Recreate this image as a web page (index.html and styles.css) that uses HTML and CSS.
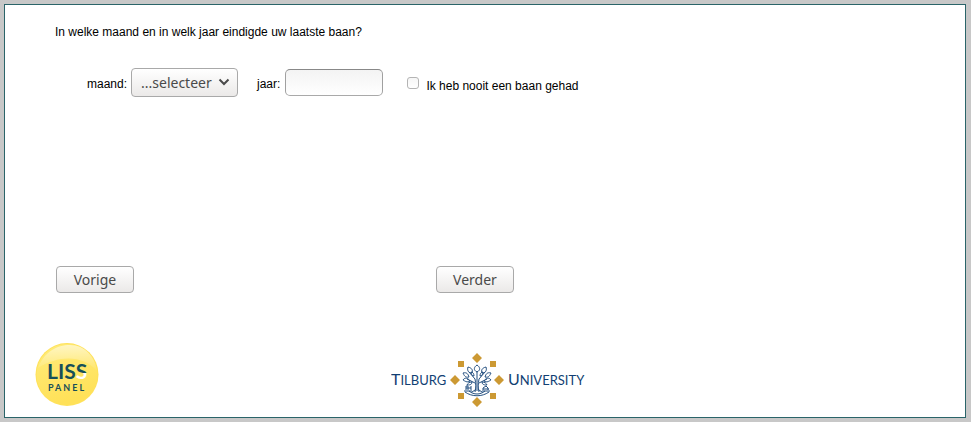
FILE: index.html
```html
<!DOCTYPE html>
<html lang="nl">
<head>
<meta charset="utf-8">
<meta name="viewport" content="width=device-width, initial-scale=1">
<title>LISS panel</title>
<link rel="stylesheet" href="styles.css">
</head>
<body>
<main class="panel">
  <form class="survey">
    <p class="question">In welke maand en in welk jaar eindigde uw laatste baan?</p>
    <div class="fields">
      <div class="field field-month">
        <label class="field-label" for="month">maand:</label>
        <span class="select-wrap">
          <select id="month" class="control select">
            <option>...selecteer</option>
            <option>januari</option><option>februari</option><option>maart</option>
            <option>april</option><option>mei</option><option>juni</option>
            <option>juli</option><option>augustus</option><option>september</option>
            <option>oktober</option><option>november</option><option>december</option>
          </select>
          <svg class="chevron" viewBox="0 0 12 8" aria-hidden="true"><path d="M1.500 1.500 6 6l4.500-4.500"/></svg>
        </span>
      </div>
      <div class="field field-year">
        <label class="field-label" for="year">jaar:</label>
        <input id="year" class="control year" type="text">
      </div>
      <div class="field field-never">
        <input id="never" class="tick" type="checkbox">
        <label class="tick-label" for="never">Ik heb nooit een baan gehad</label>
      </div>
    </div>
    <div class="actions">
      <button class="control button" type="button">Vorige</button>
      <button class="control button" type="button">Verder</button>
    </div>
  </form>
  <footer class="logos">
    <svg class="liss" viewBox="0 0 64 64" role="img" aria-label="LISS panel">
      <defs>
        <linearGradient id="shine" x1="0" y1="0" x2="0.300" y2="1">
          <stop offset="0" stop-color="#ffec7c"/><stop offset="1" stop-color="#ffe158"/>
        </linearGradient>
        <linearGradient id="gloss" x1="0" y1="0" x2="0" y2="1">
          <stop offset="0" stop-color="#fff" stop-opacity=".55"/><stop offset="1" stop-color="#fff" stop-opacity=".02"/>
        </linearGradient>
        <linearGradient id="last-s" gradientUnits="userSpaceOnUse" x1="0" y1="20" x2="0" y2="36">
          <stop offset=".65" stop-color="#174f59"/><stop offset=".65" stop-color="#fff"/>
        </linearGradient>
      </defs>
      <circle cx="32" cy="31.500" r="31.500" fill="#ffe25a"/>
      <circle cx="32" cy="31.500" r="30.500" fill="url(#shine)"/>
      <path d="M3 25C9 9 22 2 35 2c15 0 25 12 27 26C48 12 24 12 3 25Z" fill="url(#gloss)"/>
      <text class="liss-mark" x="12" y="36">LIS<tspan class="liss-last">S</tspan></text>
      <text class="liss-name" x="13" y="48">PANEL</text>
    </svg>
    <svg class="tilburg" viewBox="0 0 194 54" role="img" aria-label="Tilburg University">
      <text class="uni-name" x="0" y="32">T<tspan class="small">ILBURG</tspan></text>
      <text class="uni-name" x="117" y="32">U<tspan class="small">NIVERSITY</tspan></text>
      <g fill="#cc9933">
        <path d="m86 0 5 5-5 5-5-5ZM86 44l5 5-5 5-5-5ZM64 22l5 5-5 5-5-5ZM108 22l5 5-5 5-5-5Z"/>
        <path d="M67 8h6v6h-6ZM99 8h6v6h-6ZM67 40h6v6h-6ZM99 40h6v6h-6Z"/>
      </g>
      <g class="tree">
        <path d="M84 39c1-4 1-8 0-13M88 39c-1-4-1-8 0-13M86 38V18M81 39l3-2M91 39l-3-2M84 30l-8-4M88 30l8-4M84 26l-6-7M88 26l6-7"/>
        <path d="M86 19c-4-2-3-5 0-7 3 2 4 5 0 7ZM81 20c-4 0-5-3-4-6 4 1 5 3 4 6ZM91 20c4 0 5-3 4-6-4 1-5 3-4 6ZM78 24c-4 1-5-2-6-4 4-1 5 1 6 4ZM94 24c4 1 5-2 6-4-4-1-5 1-6 4ZM79 28c-3 2-5 0-7-1 2-3 5-2 7 1ZM93 28c3 2 5 0 7-1-2-3-5-2-7 1ZM83 23c-2 0-3-2-3-4 2 0 3 2 3 4ZM89 23c2 0 3-2 3-4-2 0-3 2-3 4ZM81 29c0 3-3 3-5 3 1-2 2-3 5-3ZM91 29c0 3 3 3 5 3-1-2-2-3-5-3Z"/>
        <path d="M75 37v-4h2v4M75 35h5M80 33v4M92 37v-2l3-2 2 2v2M92 36h6M73 38h8M91 38h8M74 39c7 5 17 5 24 0M78 38c5 4 11 4 16 0"/>
      </g>
    </svg>
  </footer>
</main>
</body>
</html>
```
FILE: styles.css
```css
* { box-sizing: border-box; }

body {
  margin: 0;
  padding: 4px 5px 4px 4px;
  min-height: 100vh;
  display: flex;
  background: #c8c8c8;
  color: #000;
  font: 12px/16px "Liberation Sans", Arial, sans-serif;
}

.panel {
  flex: 1;
  padding: 19px 30px 10px;
  background: #fff;
  border: 1px solid #2a6469;
}

.survey { padding-left: 20px; }

.question { margin: 0 0 28px; }

.fields {
  display: flex;
  flex-wrap: wrap;
  align-items: center;
  padding-left: 32px;
}

.field {
  display: flex;
  align-items: center;
  gap: 4px;
}

.field-label { padding-top: 2px; }

.field-month { margin-right: 19px; }

.field-year {
  gap: 5px;
  margin-right: 24px;
}

.field-never { gap: 7px; }

.control {
  height: 27px;
  margin: 0;
  border: 1px solid #a9a9a9;
  border-radius: 4px;
  background: linear-gradient(#fff, #ebe9e8);
  color: #4a4a4a;
  font: 14px/20px "Noto Sans", sans-serif;
}

.select-wrap {
  position: relative;
  display: flex;
}

.select {
  appearance: none;
  width: 107px;
  height: 29px;
  padding: 0 24px 0 9px;
}

.chevron {
  position: absolute;
  right: 8px;
  top: 10px;
  width: 12px;
  height: 8px;
  fill: none;
  stroke: #4a4a4a;
  stroke-width: 2;
  pointer-events: none;
}

.year {
  width: 98px;
  padding: 0 6px;
  border-color: #888 #a0a0a0 #a9a9a9;
  border-radius: 5px;
  background: linear-gradient(#f3f3f3, #fff);
}

.tick {
  appearance: none;
  width: 12px;
  height: 12px;
  margin: 0;
  border: 1px solid #b4b4b4;
  border-radius: 3px;
  background: linear-gradient(#f6f6f6, #fff);
}

.tick:checked { background: #2a6469; }

.tick-label { padding-top: 6px; }

.actions {
  display: grid;
  grid-template-columns: 380px 1fr;
  margin-top: 169px;
  padding-left: 1px;
}

.button {
  width: 78px;
  padding: 0;
}

.logos {
  display: flex;
  align-items: flex-start;
  gap: 292px;
  margin-top: 50px;
}

.liss {
  flex: none;
  width: 64px;
  height: 64px;
}

.liss-mark {
  fill: #174f59;
  font: bold 21px Lato, sans-serif;
}

.liss-last { fill: url(#last-s); }

.liss-name {
  fill: #174f59;
  font: bold 9px Lato, sans-serif;
  letter-spacing: 2px;
}

.tilburg {
  flex: none;
  width: 194px;
  height: 54px;
  margin-top: 10px;
}

.uni-name {
  fill: #123f73;
  font: 16px Lato, sans-serif;
}

.small { font-size: 13px; }

.tree {
  fill: none;
  stroke: #234f80;
  stroke-width: 1;
}
```
